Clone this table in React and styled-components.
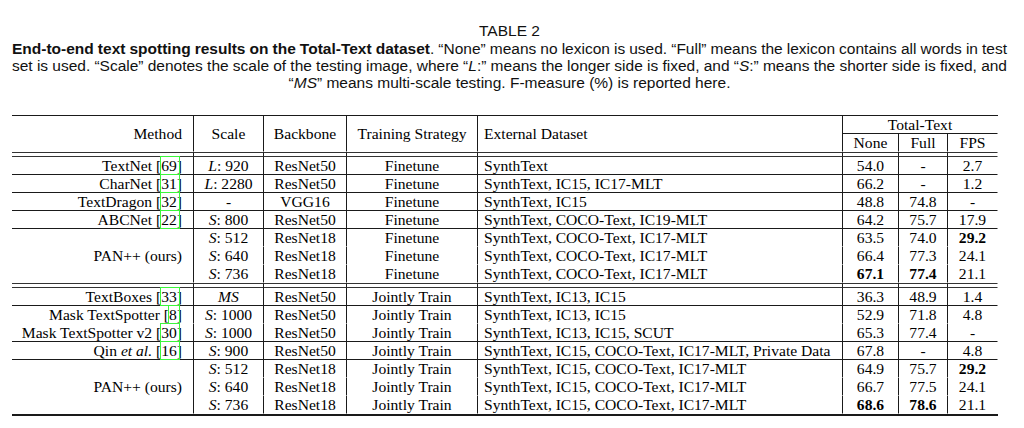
import React from "react";
import styled, { createGlobalStyle } from "styled-components";

const GlobalStyle = createGlobalStyle`
  html, body { margin: 0; padding: 0; background: #fff; }
  body { width: 1024px; height: 428px; overflow: hidden; }
`;

const Page = styled.div`
  box-sizing: border-box;
  width: 1024px;
  padding: 22px 0 0 12px;
  display: flex;
  flex-direction: column;
`;

const Caption = styled.div`
  width: 995px;
  font-family: "Liberation Sans", Arial, Helvetica, sans-serif;
  font-size: 15.5px;
  line-height: 17px;
  color: #111;
`;

const Title = styled.div`
  text-align: center;
  margin-bottom: 1px;
`;

const CapLine = styled.div`
  text-align: ${(p) => (p.$center ? "center" : "justify")};
  text-align-last: ${(p) => (p.$center ? "center" : "justify")};
  word-spacing: ${(p) => (p.$center ? "0" : "-1.5px")};
`;

const Table = styled.table`
  margin-top: 24px;
  width: 986px;
  table-layout: fixed;
  border-collapse: separate;
  border-spacing: 0;
  font-family: "Liberation Serif", "Times New Roman", serif;
  font-size: 15.6px;
  color: #000;
  border-top: 1px solid #1a1a1a;
  border-bottom: 2px solid #1a1a1a;
`;

const Cell = styled.td`
  box-sizing: border-box;
  height: ${(p) => p.$h || 17}px;
  line-height: 17px;
  padding: ${(p) =>
    p.$align === "right" ? "0 11px 0 0" : p.$align === "left" ? "0 0 0 6px" : "0"};
  text-align: ${(p) => p.$align || "center"};
  vertical-align: middle;
  white-space: nowrap;
  font-weight: ${(p) => (p.$bold ? 700 : 400)};
  border-right: 1px solid ${(p) => (p.$last ? "transparent" : "#1a1a1a")};
  border-bottom: 1px solid ${(p) => (p.$rule ? "#1a1a1a" : "transparent")};
`;

const HeadCell = styled(Cell).attrs({ as: "th" })`
  font-weight: 400;
`;

const GapCell = styled.td`
  height: 3px;
  padding: 0;
  border-top: 1px solid #333;
  border-bottom: 1px solid #333;
  border-right: 1px solid ${(p) => (p.$last ? "transparent" : "#1a1a1a")};
`;

const Cite = styled.span`
  position: relative;
  &::after {
    content: "";
    position: absolute;
    left: -1px;
    right: -3px;
    top: -1px;
    bottom: -1px;
    border: 1px solid #3cf53c;
    pointer-events: none;
  }
`;

const It = styled.i`
  font-style: italic;
`;

const widths = [182, 70, 83, 131, 365, 56, 49, 50];

const Ref = ({ n }) => (
  <>
    {" "}[<Cite>{n}</Cite>]
  </>
);

const ScaleText = ({ v }) => {
  if (v === "-") return "-";
  if (v === "MS") return <It>MS</It>;
  const [k, num] = v.split(":");
  return (
    <>
      <It>{k}</It>:{num}
    </>
  );
};

const sec1 = [
  { m: "TextNet", r: "69", s: "L: 920", b: "ResNet50", t: "Finetune", d: "SynthText", v: ["54.0", "-", "2.7"], rule: true },
  { m: "CharNet", r: "31", s: "L: 2280", b: "ResNet50", t: "Finetune", d: "SynthText, IC15, IC17-MLT", v: ["66.2", "-", "1.2"], rule: true },
  { m: "TextDragon", r: "32", s: "-", b: "VGG16", t: "Finetune", d: "SynthText, IC15", v: ["48.8", "74.8", "-"], rule: true },
  { m: "ABCNet", r: "22", s: "S: 800", b: "ResNet50", t: "Finetune", d: "SynthText, COCO-Text, IC19-MLT", v: ["64.2", "75.7", "17.9"], rule: true },
];

const pan1 = {
  t: "Finetune",
  d: "SynthText, COCO-Text, IC17-MLT",
  rows: [
    { s: "S: 512", v: ["63.5", "74.0", "29.2"], bold: [false, false, true] },
    { s: "S: 640", v: ["66.4", "77.3", "24.1"], bold: [false, false, false] },
    { s: "S: 736", v: ["67.1", "77.4", "21.1"], bold: [true, true, false] },
  ],
};

const sec2 = [
  { m: "TextBoxes", r: "33", s: "MS", b: "ResNet50", t: "Jointly Train", d: "SynthText, IC13, IC15", v: ["36.3", "48.9", "1.4"], rule: true },
  { m: "Mask TextSpotter", r: "8", s: "S: 1000", b: "ResNet50", t: "Jointly Train", d: "SynthText, IC13, IC15", v: ["52.9", "71.8", "4.8"], rule: false },
  { m: "Mask TextSpotter v2", r: "30", s: "S: 1000", b: "ResNet50", t: "Jointly Train", d: "SynthText, IC13, IC15, SCUT", v: ["65.3", "77.4", "-"], rule: true },
  { m: <>Qin <It>et al.</It></>, r: "16", s: "S: 900", b: "ResNet50", t: "Jointly Train", d: "SynthText, IC15, COCO-Text, IC17-MLT, Private Data", v: ["67.8", "-", "4.8"], rule: true },
];

const pan2 = {
  t: "Jointly Train",
  d: "SynthText, IC15, COCO-Text, IC17-MLT",
  rows: [
    { s: "S: 512", v: ["64.9", "75.7", "29.2"], bold: [false, false, true] },
    { s: "S: 640", v: ["66.7", "77.5", "24.1"], bold: [false, false, false] },
    { s: "S: 736", v: ["68.6", "78.6", "21.1"], bold: [true, true, false] },
  ],
};

const MethodRow = ({ row }) => (
  <tr>
    <Cell $align="right" $rule={row.rule}>
      {row.m}
      <Ref n={row.r} />
    </Cell>
    <Cell $rule={row.rule}>
      <ScaleText v={row.s} />
    </Cell>
    <Cell $rule={row.rule}>{row.b}</Cell>
    <Cell $rule={row.rule}>{row.t}</Cell>
    <Cell $align="left" $rule={row.rule}>{row.d}</Cell>
    <Cell $rule={row.rule}>{row.v[0]}</Cell>
    <Cell $rule={row.rule}>{row.v[1]}</Cell>
    <Cell $rule={row.rule} $last>{row.v[2]}</Cell>
  </tr>
);

const PanBlock = ({ block }) => (
  <>
    {block.rows.map((r, i) => (
      <tr key={i}>
        {i === 0 && (
          <Cell $align="right" rowSpan={3}>
            PAN++ (ours)
          </Cell>
        )}
        <Cell>
          <ScaleText v={r.s} />
        </Cell>
        <Cell>ResNet18</Cell>
        <Cell>{block.t}</Cell>
        <Cell $align="left">{block.d}</Cell>
        <Cell $bold={r.bold[0]}>{r.v[0]}</Cell>
        <Cell $bold={r.bold[1]}>{r.v[1]}</Cell>
        <Cell $bold={r.bold[2]} $last>{r.v[2]}</Cell>
      </tr>
    ))}
  </>
);

const DoubleRule = () => (
  <tr>
    {widths.map((_, i) => (
      <GapCell key={i} $last={i === widths.length - 1} />
    ))}
  </tr>
);

export default function App() {
  return (
    <>
      <GlobalStyle />
      <Page>
        <Caption>
          <Title>TABLE 2</Title>
          <CapLine>
            <b>End-to-end text spotting results on the Total-Text dataset</b>. “None” means no lexicon is used. “Full” means the lexicon contains all words in test
          </CapLine>
          <CapLine>
            set is used. “Scale” denotes the scale of the testing image, where “<i>L</i>:” means the longer side is fixed, and “<i>S</i>:” means the shorter side is fixed, and
          </CapLine>
          <CapLine $center>
            “<i>MS</i>” means multi-scale testing. F-measure (%) is reported here.
          </CapLine>
        </Caption>
        <Table>
          <colgroup>
            {widths.map((w, i) => (
              <col key={i} style={{ width: w }} />
            ))}
          </colgroup>
          <thead>
            <tr>
              <HeadCell $align="right" rowSpan={2}>Method</HeadCell>
              <HeadCell rowSpan={2}>Scale</HeadCell>
              <HeadCell rowSpan={2}>Backbone</HeadCell>
              <HeadCell rowSpan={2}>Training Strategy</HeadCell>
              <HeadCell $align="left" rowSpan={2}>External Dataset</HeadCell>
              <HeadCell colSpan={3} $rule $last $h={16}>Total-Text</HeadCell>
            </tr>
            <tr>
              <HeadCell>None</HeadCell>
              <HeadCell>Full</HeadCell>
              <HeadCell $last>FPS</HeadCell>
            </tr>
          </thead>
          <tbody>
            <DoubleRule />
            {sec1.map((r, i) => (
              <MethodRow key={i} row={r} />
            ))}
            <PanBlock block={pan1} />
            <DoubleRule />
            {sec2.map((r, i) => (
              <MethodRow key={i} row={r} />
            ))}
            <PanBlock block={pan2} />
          </tbody>
        </Table>
      </Page>
    </>
  );
}
